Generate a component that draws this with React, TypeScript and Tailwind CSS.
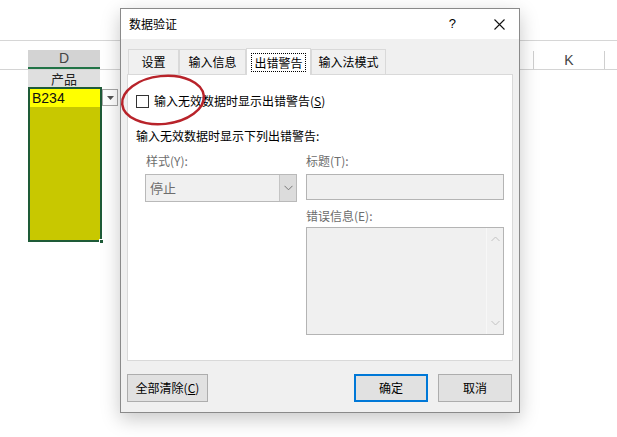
const cjk = "font-['Microsoft_YaHei','Noto_Sans_CJK_SC',sans-serif]";

function Tab({ label, active, w }: { label: string; active?: boolean; w: string }) {
  if (active) {
    return (
      <div className={`relative z-10 -mb-px flex h-[27px] items-center justify-center border border-b-0 border-[#d9d9d9] bg-white ${w}`}>
        <span className="border border-dotted border-black px-[2px] leading-[17px]">{label}</span>
      </div>
    );
  }
  return (
    <div className={`mt-[1px] flex h-[25px] items-center justify-center border border-b-0 border-[#d9d9d9] ${w}`}>
      {label}
    </div>
  );
}

function Btn({ children, primary, w }: { children: React.ReactNode; primary?: boolean; w: string }) {
  return (
    <div
      className={`flex h-[28px] items-center justify-center bg-[#e1e1e1] ${w} ${
        primary ? "border-2 border-[#0078d7]" : "border border-[#adadad]"
      }`}
    >
      {children}
    </div>
  );
}

function Dialog() {
  return (
    <div
      className={`absolute left-[120px] top-[8px] flex h-[405px] w-[400px] flex-col border border-[#8a8a8a] bg-[#f0f0f0] text-[12px] text-black shadow-[0_6px_18px_rgba(0,0,0,0.22)] ${cjk}`}
    >
      {/* title bar */}
      <div className="flex h-[30px] items-center bg-white pl-[8px] pr-[14px]">
        <span>数据验证</span>
        <span className="ml-auto mr-[38px] text-[13px] font-['Liberation_Sans',sans-serif]">?</span>
        <svg width="11" height="11" viewBox="0 0 11 11">
          <path d="M0.5 0.5 L10.5 10.5 M10.5 0.5 L0.5 10.5" stroke="#111" strokeWidth="1.1" />
        </svg>
      </div>

      {/* tabs */}
      <div className="mt-[9px] flex items-end pl-[7px]">
        <Tab label="设置" w="w-[51px]" />
        <Tab label="输入信息" w="w-[67px]" />
        <Tab label="出错警告" w="w-[65px]" active />
        <Tab label="输入法模式" w="w-[75px]" />
      </div>

      {/* panel */}
      <div className="mx-[6px] h-[287px] border border-[#d9d9d9] bg-white pl-[8px] pt-[17px]">
        <div className="flex items-center">
          <div className="h-[13px] w-[13px] border border-[#333] bg-white" />
          <span className="ml-[5px]">
            输入无效数据时显示出错警告(<span className="underline">S</span>)
          </span>
        </div>
        <div className="mt-[18px] leading-[16px]">输入无效数据时显示下列出错警告:</div>

        <div className="mt-[9px] flex gap-[9px] pl-[9px] leading-[16px]">
          <div className="flex w-[152px] flex-col">
            <span className="pl-[1px] text-[#6d6d6d]">样式(Y):</span>
            <div className="mt-[5px] flex h-[28px] border border-[#b9b9b9] bg-[#f0f0f0]">
              <span className="flex flex-1 items-center pl-[4px] text-[13px] text-[#6d6d6d]">停止</span>
              <div className="flex w-[17px] items-center justify-center border-l border-[#c4c4c4] bg-[#dcdcdc]">
                <svg width="9" height="6" viewBox="0 0 9 6">
                  <path d="M0.5 0.8 L4.5 4.8 L8.5 0.8" fill="none" stroke="#777" strokeWidth="1" />
                </svg>
              </div>
            </div>
          </div>
          <div className="flex w-[198px] flex-col">
            <span className="text-[#6d6d6d]">标题(T):</span>
            <div className="mt-[5px] h-[26px] border border-[#b4b4b4] bg-[#f0f0f0]" />
            <span className="mt-[8px] text-[#6d6d6d]">错误信息(E):</span>
            <div className="mt-[3px] flex h-[108px] border border-[#b4b4b4] bg-[#f0f0f0]">
              <div className="flex-1" />
              <div className="flex w-[17px] flex-col items-center justify-between border-l border-[#f7f7f7] py-[8px]">
                <svg width="9" height="6" viewBox="0 0 9 6">
                  <path d="M0.5 5 L4.5 1 L8.5 5" fill="none" stroke="#c2c2c2" strokeWidth="1" />
                </svg>
                <svg width="9" height="6" viewBox="0 0 9 6">
                  <path d="M0.5 1 L4.5 5 L8.5 1" fill="none" stroke="#c2c2c2" strokeWidth="1" />
                </svg>
              </div>
            </div>
          </div>
        </div>
      </div>

      {/* buttons */}
      <div className="mt-[13px] flex px-[6px]">
        <Btn w="w-[81px]">
          全部清除(<span className="underline">C</span>)
        </Btn>
        <div className="ml-auto flex gap-[10px] pr-[1px]">
          <Btn w="w-[74px]" primary>
            确定
          </Btn>
          <Btn w="w-[74px]">取消</Btn>
        </div>
      </div>
    </div>
  );
}

export default function App() {
  return (
    <div className="relative h-[437px] w-[617px] overflow-hidden bg-white font-['Liberation_Sans',sans-serif] text-[13px]">
      {/* sheet */}
      <div className="flex flex-col">
        <div className="h-[41px] border-b border-[#d6d6d6]" />
        <div className="flex h-[29px] items-end border-b border-[#d4d4d4]">
          <div className="w-[28px]" />
          <div className="flex h-[19px] w-[72px] items-center justify-center border-b-2 border-[#217346] bg-[#d3d3d3] text-[14px] text-[#444]">
            D
          </div>
          <div className="w-[433px]" />
          <div className="flex h-[18px] w-[72px] items-center justify-center border-x border-[#cfcfcf] text-[14px] text-[#444]">
            K
          </div>
        </div>
        <div className="flex h-[17px]">
          <div className="w-[28px]" />
          <div className={`flex w-[72px] items-center justify-center bg-[#dfdfdf] text-[#222] ${cjk}`}>产品</div>
        </div>
        <div className="flex">
          <div className="w-[28px]" />
          <div className="relative flex h-[155px] w-[74px] flex-col border-2 border-[#1e5b38]">
            <div className="h-[18px] bg-[#ffff00] pl-[2px] text-[14px] leading-[19px] text-[#111]">B234</div>
            <div className="flex-1 bg-[#c8c800]" />
            <div className="absolute -bottom-[4px] -right-[4px] h-[5px] w-[5px] border border-white bg-[#1e5b38]" />
          </div>
          <div className="mt-[2px] flex h-[17px] w-[16px] items-center justify-center border border-[#a8a8a8] bg-white">
            <svg width="7" height="4" viewBox="0 0 7 4">
              <path d="M0 0 L7 0 L3.5 4 Z" fill="#555" />
            </svg>
          </div>
        </div>
      </div>

      <Dialog />

      {/* red annotation */}
      <svg className="pointer-events-none absolute left-0 top-0" width="617" height="437">
        <ellipse
          cx="163"
          cy="100"
          rx="41"
          ry="24"
          fill="none"
          stroke="#b8232a"
          strokeWidth="2.5"
          transform="rotate(-6 163 100)"
        />
      </svg>
    </div>
  );
}
